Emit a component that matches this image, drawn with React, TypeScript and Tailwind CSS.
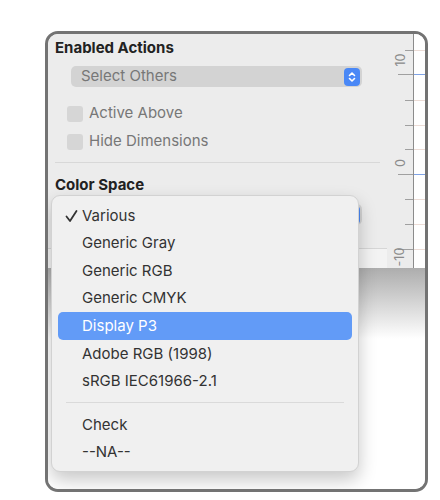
import React from "react";

const items = [
  "Various",
  "Generic Gray",
  "Generic RGB",
  "Generic CMYK",
  "Display P3",
  "Adobe RGB (1998)",
  "sRGB IEC61966-2.1",
];

function Stepper() {
  return (
    <div className="w-[16px] h-[18px] rounded-[4px] bg-[#4a88f6] flex items-center justify-center">
      <svg width="8" height="12" viewBox="0 0 8 12" fill="none" stroke="white" strokeWidth="1.6" strokeLinecap="round" strokeLinejoin="round">
        <path d="M1.5 4.5L4 2l2.5 2.5" />
        <path d="M1.5 7.5L4 10l2.5-2.5" />
      </svg>
    </div>
  );
}

function Ruler() {
  const minor = [50, 100, 125, 149, 199, 224];
  const major = [74, 174, 249];
  return (
    <div className="relative w-[38px] h-full flex">
      <div className="w-[26px] h-full bg-[#ececec]" />
      <div className="w-px h-full bg-[#8c8c8c]" />
      <div className="flex-1 h-full bg-white" />
      {minor.map((y) => (
        <React.Fragment key={y}>
          <div className="absolute left-[18px] w-[8px] h-px bg-[#a0a0a0]" style={{ top: y - 34 }} />
          <div className="absolute left-[27px] right-0 h-px bg-[#ecdcd6]" style={{ top: y - 34 }} />
        </React.Fragment>
      ))}
      {major.map((y, i) => (
        <React.Fragment key={y}>
          <div className="absolute left-[11px] w-[15px] h-px bg-[#a0a0a0]" style={{ top: y - 34 }} />
          <div className={"absolute left-[27px] right-0 h-px " + (i < 2 ? "bg-[#7fa3e6]" : "bg-[#ecdcd6]")} style={{ top: y - 34 }} />
        </React.Fragment>
      ))}
      <span className="absolute left-[8px] top-[18px] w-[12px] h-[16px] flex items-center justify-center -rotate-90 text-[12.5px] text-[#8a8a8a] leading-none">10</span>
      <span className="absolute left-[8px] top-[121px] w-[12px] h-[16px] flex items-center justify-center -rotate-90 text-[12.5px] text-[#8a8a8a] leading-none">0</span>
      <span className="absolute left-[1px] top-[215px] w-[24px] h-[16px] flex items-center justify-center -rotate-90 text-[12.5px] text-[#8a8a8a] leading-none">-10</span>
    </div>
  );
}

export default function App() {
  return (
    <div className="w-[440px] h-[500px] bg-white pt-[31px] pl-[45px] font-['Inter',sans-serif]">
      <div className="relative w-[383px] h-[461px] border-[3px] border-[#737373] rounded-[13px] overflow-hidden flex flex-col">
        {/* inspector panel */}
        <div className="h-[234px] flex bg-[#ececec]">
          <div className="flex-1 flex flex-col">
            <div className="pl-[7px] pt-[4px] h-[20px] leading-[20px] text-[15px] font-bold text-[#222]">Enabled Actions</div>
            <div className="mt-[12px] ml-[23px] w-[291px] h-[21px] rounded-[5px] bg-[#d3d3d3] flex items-center justify-between pl-[10px] pr-[2px]">
              <span className="text-[15px] text-[#777]">Select Others</span>
              <Stepper />
            </div>
            <div className="mt-[18px] ml-[19px] flex items-center gap-[6px] h-[17px]">
              <div className="w-[16px] h-[16px] rounded-[3px] bg-[#d6d6d6]" />
              <span className="text-[15px] text-[#777]">Active Above</span>
            </div>
            <div className="mt-[11px] ml-[19px] flex items-center gap-[6px] h-[17px]">
              <div className="w-[16px] h-[16px] rounded-[3px] bg-[#d6d6d6]" />
              <span className="text-[15px] text-[#777]">Hide Dimensions</span>
            </div>
            <div className="mt-[12px] ml-[7px] w-[325px] h-px bg-[#d8d8d8]" />
            <div className="pl-[7px] mt-[12px] h-[20px] leading-[20px] text-[15px] font-bold text-[#222]">Color Space</div>
            <div className="mt-[9px] ml-[23px] w-[291px] h-[21px] rounded-[5px] bg-[#d3d3d3] flex items-center justify-end pr-[2px]">
              <Stepper />
            </div>
            <div className="mt-[23px] w-[339px] h-px bg-[#d6d6d6]" />
            <div className="flex-1 w-[339px] bg-[#f3f3f3]" />
          </div>
          <Ruler />
        </div>
        {/* canvas below */}
        <div className="flex-1 bg-linear-to-b from-[#adadad] to-white to-[32%]" />

        {/* popup menu */}
        <div className="absolute left-[3px] top-[161px] w-[308px] h-[277px] rounded-[9px] bg-[#f0f0f0] border border-[#d2d2d2] shadow-[0_8px_18px_rgba(0,0,0,0.22)] pt-[6px] pb-[5px] px-[6px] flex flex-col">
          {items.map((t) => {
            const active = t === "Display P3";
            return (
              <div
                key={t}
                className={
                  "relative h-[28px] flex items-center pl-[24px] rounded-[5px] text-[15px] " +
                  (active ? "bg-[#629bf7] text-white" : "text-[#333]")
                }
              >
                {t === "Various" && (
                  <span className="absolute left-[7px] top-[7px]">
                    <svg width="13" height="14" viewBox="0 0 13 14" fill="none" stroke="#333" strokeWidth="1.8" strokeLinecap="round" strokeLinejoin="round">
                      <path d="M1.5 7.5l3.5 4.5L11.5 2" />
                    </svg>
                  </span>
                )}
                {t}
              </div>
            );
          })}
          <div className="h-[15px] flex items-center px-[8px]">
            <div className="w-full h-px bg-[#dadada]" />
          </div>
          <div className="pt-[2px] flex flex-col">
            {["Check", "--NA--"].map((t) => (
              <div key={t} className="h-[27px] flex items-center pl-[24px] text-[15px] text-[#333]">
                {t}
              </div>
            ))}
          </div>
        </div>
      </div>
    </div>
  );
}
